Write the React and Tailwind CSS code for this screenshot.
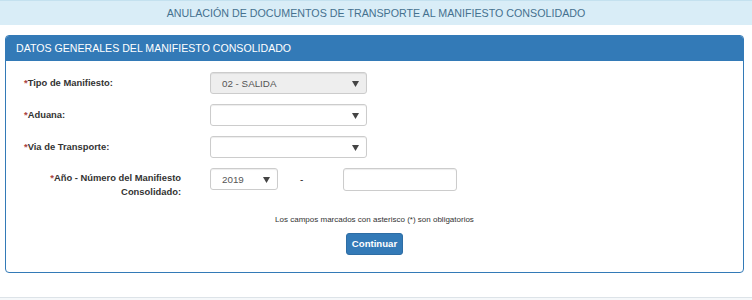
import React from "react";

function Arrow() {
  return (
    <svg width="7" height="6" viewBox="0 0 7 6" className="absolute right-[7px] top-[8px]">
      <path d="M0 0 L7 0 L3.5 6 Z" fill="#444" />
    </svg>
  );
}

function Select({ value, disabled, w }) {
  return (
    <div
      className={`relative h-[22px] rounded-[3px] border border-[#ccc] ${disabled ? "bg-[#eee]" : "bg-white"} ${w} shadow-[inset_0_1px_1px_rgba(0,0,0,0.075)]`}
    >
      <span className="absolute left-[11px] top-[4px] text-[9.8px] text-[#555]">{value}</span>
      <Arrow />
    </div>
  );
}

function Label({ children }) {
  return (
    <div className="w-[204px] pl-[18px] text-[9.4px] font-bold text-[#333]">
      <span className="text-[#a94442]">*</span>
      {children}
    </div>
  );
}

export default function App() {
  return (
    <div className="w-[752px] h-[300px] bg-white font-['Liberation_Sans',Arial,sans-serif] overflow-hidden">
      <div className="h-[25px] bg-[#d9edf7] border-t border-[#c4e1ef] flex items-center justify-center text-[10.7px] text-[#45718f]">
        ANULACIÓN DE DOCUMENTOS DE TRANSPORTE AL MANIFIESTO CONSOLIDADO
      </div>
      <div className="mx-[5px] mt-[10px] w-[739px] h-[238px] border border-[#337ab7] rounded-[4px] overflow-hidden">
        <div className="h-[25px] bg-[#337ab7] text-white text-[10.6px] flex items-center pl-[10px]">
          DATOS GENERALES DEL MANIFIESTO CONSOLIDADO
        </div>
        <div className="pt-[11px] flex flex-col">
          <div className="flex items-center h-[22px]">
            <Label>Tipo de Manifiesto:</Label>
            <Select value="02 - SALIDA" disabled w="w-[157px]" />
          </div>
          <div className="flex items-center h-[22px] mt-[10px]">
            <Label>Aduana:</Label>
            <Select value="" w="w-[157px]" />
          </div>
          <div className="flex items-center h-[22px] mt-[10px]">
            <Label>Via de Transporte:</Label>
            <Select value="" w="w-[157px]" />
          </div>
          <div className="flex items-start mt-[10px]">
            <div className="w-[175px] text-right text-[9.4px] font-bold text-[#333] leading-[14px] pt-[3px]">
              <span className="text-[#a94442]">*</span>Año - Número del Manifiesto
              <br />
              Consolidado:
            </div>
            <div className="ml-[29px]">
              <Select value="2019" w="w-[68px]" />
            </div>
            <div className="w-[65px] pl-[22px] text-[10px] text-[#333] pt-[4px]">-</div>
            <div className="h-[23px] w-[114px] rounded-[3px] border border-[#ccc] bg-white shadow-[inset_0_1px_1px_rgba(0,0,0,0.075)]" />
          </div>
          <div className="mt-[15px] text-center text-[8px] text-[#333]">
            Los campos marcados con asterisco (*) son obligatorios
          </div>
          <div className="flex justify-center mt-[7px]">
            <button className="h-[22px] w-[57px] rounded-[3px] bg-[#337ab7] border border-[#2e6da4] text-white text-[9.6px] font-bold">
              Continuar
            </button>
          </div>
        </div>
      </div>
      <div className="mt-[24px] h-[4px] border-t border-[#dde3e8] bg-[#f5f8fa]" />
    </div>
  );
}
